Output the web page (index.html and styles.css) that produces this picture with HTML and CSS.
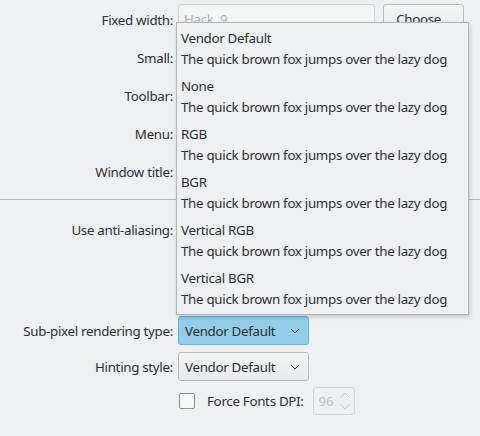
FILE: index.html
```html
<!DOCTYPE html>
<html>
<head>
<meta charset="utf-8">
<link rel="stylesheet" href="styles.css">
</head>
<body>
<div class="page">
  <div class="form top">
    <div class="row r1">
      <div class="label">Fixed width:</div>
      <div class="field fontfield">
        <div class="lineedit">Hack, 9</div>
        <div class="button">Choose...</div>
      </div>
    </div>
    <div class="row"><div class="label">Small:</div><div class="field"></div></div>
    <div class="row"><div class="label">Toolbar:</div><div class="field"></div></div>
    <div class="row"><div class="label">Menu:</div><div class="field"></div></div>
    <div class="row"><div class="label">Window title:</div><div class="field"></div></div>
  </div>
  <div class="separator"></div>
  <div class="form bottom">
    <div class="row aa"><div class="label">Use anti-aliasing:</div><div class="field"></div></div>
    <div class="row combo-row sub"><div class="label">Sub-pixel rendering type:</div>
      <div class="field"><div class="combo active"><span>Vendor Default</span><svg class="chev" width="10" height="6" viewBox="0 0 10 6"><path d="M1 1 L5 5 L9 1" fill="none" stroke="#31363b" stroke-width="1"/></svg></div></div>
    </div>
    <div class="row combo-row"><div class="label">Hinting style:</div>
      <div class="field"><div class="combo"><span>Vendor Default</span><svg class="chev" width="10" height="6" viewBox="0 0 10 6"><path d="M1 1 L5 5 L9 1" fill="none" stroke="#31363b" stroke-width="1"/></svg></div></div>
    </div>
    <div class="row dpi-row"><div class="label"></div>
      <div class="field dpi">
        <span class="checkbox"></span>
        <span class="dpi-label">Force Fonts DPI:</span>
        <div class="spin"><span>96</span>
          <svg class="spin-arrows" width="12" height="22" viewBox="0 0 12 22"><path d="M1.5 7.5 L6 3 L10.5 7.5" fill="none" stroke="#c4c6c8" stroke-width="1"/><path d="M1.5 14.5 L6 19 L10.5 14.5" fill="none" stroke="#c4c6c8" stroke-width="1"/></svg>
        </div>
      </div>
    </div>
  </div>

  <div class="popup">
    <div class="item"><div class="title">Vendor Default</div><div class="desc">The quick brown fox jumps over the lazy dog</div></div>
    <div class="item"><div class="title">None</div><div class="desc">The quick brown fox jumps over the lazy dog</div></div>
    <div class="item"><div class="title">RGB</div><div class="desc">The quick brown fox jumps over the lazy dog</div></div>
    <div class="item"><div class="title">BGR</div><div class="desc">The quick brown fox jumps over the lazy dog</div></div>
    <div class="item"><div class="title">Vertical RGB</div><div class="desc">The quick brown fox jumps over the lazy dog</div></div>
    <div class="item"><div class="title">Vertical BGR</div><div class="desc">The quick brown fox jumps over the lazy dog</div></div>
  </div>
</div>
</body>
</html>
```

FILE: styles.css
```css
html, body {
  margin: 0;
  padding: 0;
  background: #eff0f1;
}
body {
  font-family: "Noto Sans", "DejaVu Sans", sans-serif;
  font-size: 13.33px;
  letter-spacing: -0.3px;
  color: #2b3035;
  width: 480px;
  height: 436px;
  overflow: hidden;
}
.page {
  position: relative;
  width: 480px;
  height: 436px;
}
.form {
  display: flex;
  flex-direction: column;
}
.top {
  padding-top: 4px;
  gap: 6px;
}
.row {
  display: grid;
  grid-template-columns: 173px 1fr;
  column-gap: 5px;
  height: 32px;
  align-items: center;
}
.label {
  text-align: right;
  white-space: nowrap;
}
.field {
  display: flex;
  align-items: center;
}
.fontfield {
  gap: 8px;
  height: 32px;
  align-items: flex-start;
}
.lineedit {
  box-sizing: border-box;
  width: 197px;
  height: 30px;
  border: 1px solid #d3d5d7;
  border-radius: 3px;
  background: #f4f5f5;
  color: #b0b2b4;
  padding-left: 5px;
  line-height: 28px;
}
.button {
  box-sizing: border-box;
  width: 81px;
  height: 30px;
  border: 1px solid #b9bbbe;
  border-radius: 3px;
  background: linear-gradient(#f3f4f4, #eaebec);
  text-align: center;
  line-height: 28px;
}
.separator {
  height: 1px;
  background: #b8babc;
  margin-top: 11px;
}
.bottom {
  padding-top: 14px;
}
.aa {
  height: 32px;
}
.combo-row {
  height: 29px;
}
.sub {
  margin-top: 70px;
}
.combo-row + .combo-row {
  margin-top: 7px;
}
.combo {
  box-sizing: border-box;
  width: 131px;
  height: 29px;
  border: 1px solid #b9bbbe;
  border-radius: 3px;
  background: linear-gradient(#f3f4f4, #e9eaeb);
  display: flex;
  align-items: center;
  justify-content: space-between;
  padding: 0 8px 0 6px;
}
.combo.active {
  background: #93cde9;
  border-color: #5fb6e0;
}
.chev {
  display: block;
}
.dpi-row {
  height: 28px;
  margin-top: 6px;
}
.dpi {
  height: 28px;
}
.checkbox {
  box-sizing: border-box;
  width: 16px;
  height: 16px;
  border: 1px solid #8b8e91;
  border-radius: 2px;
  background: #f7f8f8;
  margin-left: 1px;
  flex: none;
}
.dpi-label {
  margin-left: 12px;
}
.spin {
  box-sizing: border-box;
  width: 42px;
  height: 28px;
  margin-left: 9px;
  border: 1px solid #d3d5d7;
  border-radius: 3px;
  display: flex;
  align-items: center;
  justify-content: space-between;
  padding: 0 3px 0 5px;
  color: #c0c2c4;
}
.spin-arrows {
  display: block;
}
.popup {
  position: absolute;
  left: 176px;
  top: 22px;
  width: 293px;
  height: 293px;
  box-sizing: border-box;
  border: 1px solid #b4b6b9;
  background: #eff0f1;
  box-shadow: 1px 2px 4px rgba(0, 0, 0, 0.18);
  padding: 0 0 3px 4px;
}
.item {
  padding: 5px 0 1px 0;
  line-height: 21px;
  white-space: nowrap;
}
```
